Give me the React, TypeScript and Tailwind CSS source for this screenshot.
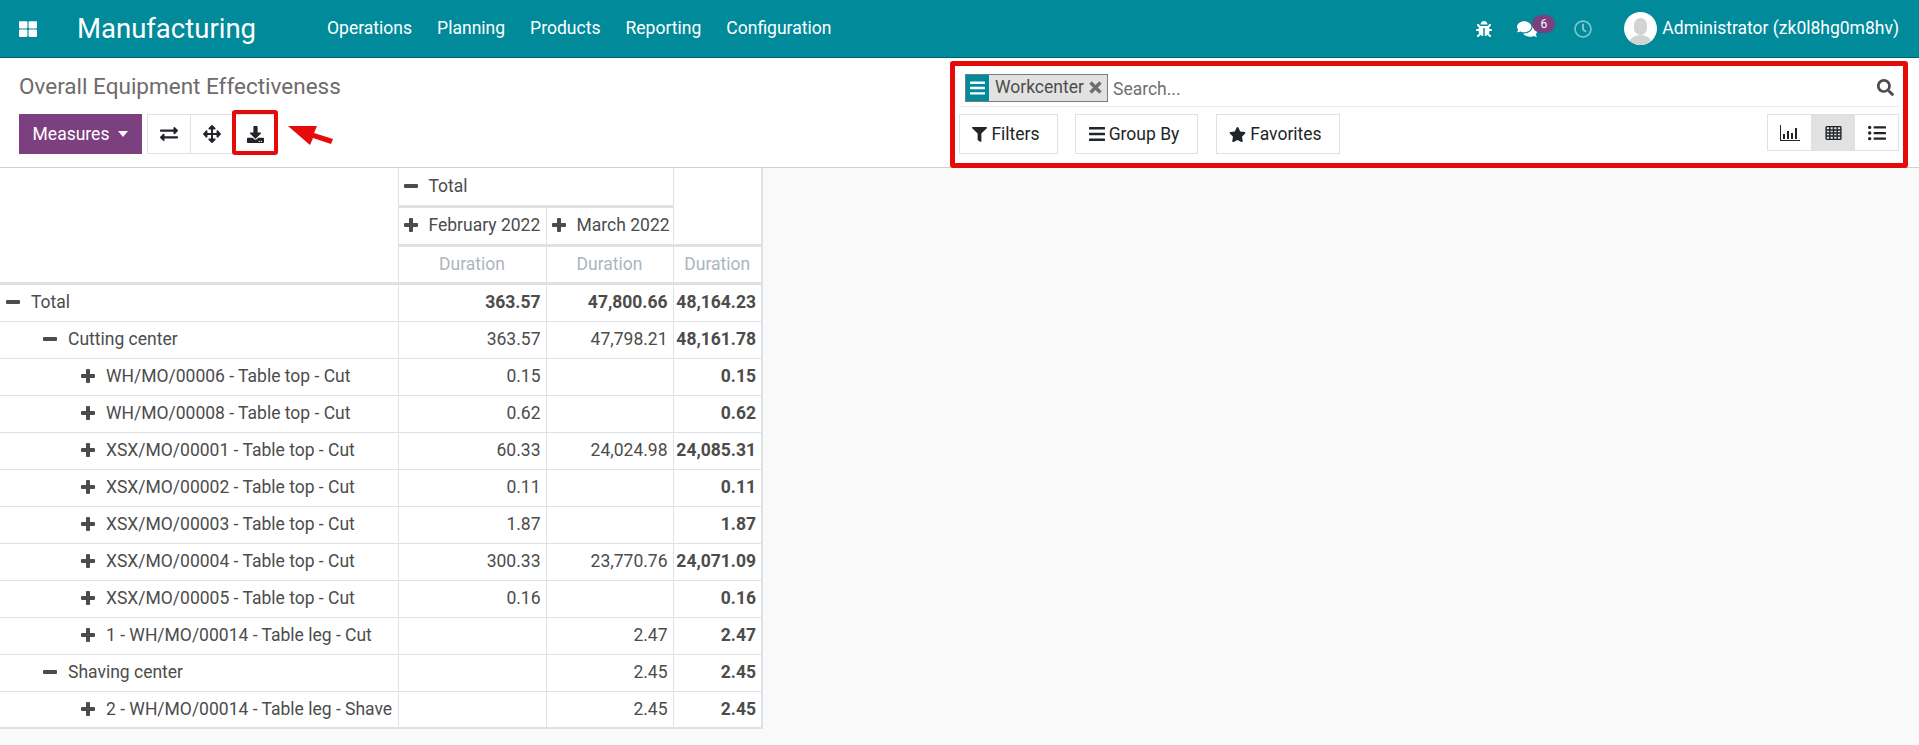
import {
  FaArrowsAlt,
  FaBug,
  FaComments,
  FaDownload,
  FaExchangeAlt,
  FaFilter,
  FaListUl,
  FaRegClock,
  FaSearch,
  FaStar,
  FaThLarge,
} from "react-icons/fa";

const menus = ["Operations", "Planning", "Products", "Reporting", "Configuration"];

type Row = {
  label: string;
  level: 0 | 1 | 2;
  open: boolean;
  feb?: string;
  mar?: string;
  total: string;
  bold?: boolean;
};

const rows: Row[] = [
  { label: "Total", level: 0, open: true, feb: "363.57", mar: "47,800.66", total: "48,164.23", bold: true },
  { label: "Cutting center", level: 1, open: true, feb: "363.57", mar: "47,798.21", total: "48,161.78" },
  { label: "WH/MO/00006 - Table top - Cut", level: 2, open: false, feb: "0.15", total: "0.15" },
  { label: "WH/MO/00008 - Table top - Cut", level: 2, open: false, feb: "0.62", total: "0.62" },
  { label: "XSX/MO/00001 - Table top - Cut", level: 2, open: false, feb: "60.33", mar: "24,024.98", total: "24,085.31" },
  { label: "XSX/MO/00002 - Table top - Cut", level: 2, open: false, feb: "0.11", total: "0.11" },
  { label: "XSX/MO/00003 - Table top - Cut", level: 2, open: false, feb: "1.87", total: "1.87" },
  { label: "XSX/MO/00004 - Table top - Cut", level: 2, open: false, feb: "300.33", mar: "23,770.76", total: "24,071.09" },
  { label: "XSX/MO/00005 - Table top - Cut", level: 2, open: false, feb: "0.16", total: "0.16" },
  { label: "1 - WH/MO/00014 - Table leg - Cut", level: 2, open: false, mar: "2.47", total: "2.47" },
  { label: "Shaving center", level: 1, open: true, mar: "2.45", total: "2.45" },
  { label: "2 - WH/MO/00014 - Table leg - Shave", level: 2, open: false, mar: "2.45", total: "2.45" },
];

const indent = ["pl-[6px]", "pl-[43px]", "pl-[81px]"];

function Toggle({ open }: { open: boolean }) {
  return (
    <svg className="mr-[11px] inline-block size-[14px] align-[-1px] text-[#4c4c4c]" viewBox="0 0 14 14" fill="currentColor">
      <rect x="0" y="5" width="14" height="4" rx="1" />
      {!open && <rect x="5" y="0" width="4" height="14" rx="1" />}
    </svg>
  );
}

function BarsIcon({ className }: { className: string }) {
  return (
    <svg className={className} viewBox="0 0 16 14" fill="currentColor">
      <rect y="0" width="16" height="2.6" rx="0.5" />
      <rect y="5.7" width="16" height="2.6" rx="0.5" />
      <rect y="11.4" width="16" height="2.6" rx="0.5" />
    </svg>
  );
}

function Navbar() {
  return (
    <header className="flex h-[58px] items-center border-b border-[#00646a] bg-[#008a9a] text-white">
      <FaThLarge className="ml-[19px] size-[18px]" />
      <span className="ml-[40px] text-[27.5px] leading-none">Manufacturing</span>
      <nav className="ml-[71px] flex gap-[25px] text-[17.55px]">
        {menus.map((m) => (
          <span key={m}>{m}</span>
        ))}
      </nav>
      <div className="ml-auto mr-[20px] flex items-center">
        <FaBug className="size-[16px]" />
        <div className="relative ml-[25px] h-[20px] w-[38px]">
          <FaComments className="size-[20px]" />
          <span className="absolute -top-[4px] left-[15px] flex h-[18px] w-[23px] items-center justify-center rounded-full bg-[#7c3f7f] text-[12px]">
            6
          </span>
        </div>
        <FaRegClock className="ml-[19px] size-[18px] opacity-50" />
        <div className="relative ml-[32px] size-[33px] overflow-hidden rounded-full bg-white">
          <span className="absolute left-[10px] top-[6px] h-[17px] w-[13px] rounded-full bg-[#d3d3d3]" />
          <span className="absolute left-[3px] top-[23px] h-[14px] w-[27px] rounded-t-full bg-[#d3d3d3]" />
        </div>
        <span className="ml-[5px] text-[17.5px]">Administrator (zk0l8hg0m8hv)</span>
      </div>
    </header>
  );
}

function Tool({ children, active }: { children: React.ReactNode; active?: boolean }) {
  return (
    <span
      className={`flex h-full flex-1 items-center justify-center border-r border-[#dee2e6] last:border-r-0 ${
        active ? "bg-[#e2e2e2]" : "bg-white"
      }`}
    >
      {children}
    </span>
  );
}

function FilterButton({ icon, label, className }: { icon: React.ReactNode; label: string; className: string }) {
  return (
    <span
      className={`flex h-[40px] items-center justify-center gap-[4px] border border-[#dee2e6] bg-white pr-[5px] text-[#212529] ${className}`}
    >
      {icon}
      {label}
    </span>
  );
}

function ControlPanel() {
  return (
    <section className="relative flex h-[110px] border-b border-[#cfcfcf] bg-white text-[17.5px]">
      <div className="w-[950px] pl-[19px]">
        <h1 className="mt-[14px] text-[22.5px] leading-[29px] text-[#6f6a6a]">Overall Equipment Effectiveness</h1>
        <div className="mt-[13px] flex h-[40px] items-center">
          <span className="flex h-[40px] w-[123px] items-center justify-center gap-[9px] bg-[#7c3f7f] text-white">
            Measures
            <svg className="h-[6px] w-[10px]" viewBox="0 0 10 6" fill="currentColor">
              <path d="M0 0h10L5 6z" />
            </svg>
          </span>
          <div className="ml-[5px] flex h-[40px] w-[130px] border border-[#dee2e6] text-[#212529]">
            <Tool>
              <FaExchangeAlt className="size-[18px]" />
            </Tool>
            <Tool>
              <FaArrowsAlt className="size-[18px]" />
            </Tool>
            <Tool>
              <FaDownload className="size-[17px]" />
            </Tool>
          </div>
          {/* annotation: arrow pointing at the download button */}
          <svg className="ml-[11px] mt-[2px] h-[21px] w-[46px]" viewBox="0 0 46 21">
            <path d="M0 1 L29 1 L26 8 L45 14 L43 19 L25 13 L22 20 Z" fill="#e60b0b" />
          </svg>
        </div>
      </div>

      <div className="flex-1 pl-[9px] pr-[20px]">
        <div className="flex h-[49px] items-center border-b border-[#e9ecef] pl-[6px] pt-[11px]">
          <span className="flex h-[28px] w-[143px] items-center border border-[#7a7a7a] bg-[#e2e2e2] text-[#4c4c4c]">
            <span className="flex h-full w-[23px] items-center justify-center bg-[#008a9a] text-white">
              <BarsIcon className="h-[14px] w-[15px]" />
            </span>
            <span className="ml-[6px]">Workcenter</span>
            <svg className="ml-[5px] size-[13px] text-[#6f6f6f]" viewBox="0 0 13 13" stroke="currentColor" strokeWidth="3.4">
              <path d="M1.5 1.5l10 10M11.5 1.5l-10 10" />
            </svg>
          </span>
          <span className="ml-[5px] mt-[3px] text-[#6f6f6f]">Search...</span>
          <FaSearch className="ml-auto mr-[5px] size-[17px] text-[#4c4c4c]" />
        </div>
        <div className="mt-[7px] flex">
          <FilterButton icon={<FaFilter className="size-[15px]" />} label="Filters" className="w-[99px]" />
          <FilterButton icon={<BarsIcon className="h-[14px] w-[16px]" />} label="Group By" className="ml-[17px] w-[123px]" />
          <FilterButton icon={<FaStar className="size-[17px]" />} label="Favorites" className="ml-[18px] w-[124px]" />
          <div className="ml-auto flex h-[37px] w-[132px] border border-[#dee2e6] text-[#212529]">
            <Tool>
              <svg className="ml-[2px] size-[20px]" viewBox="0 0 20 20" fill="currentColor">
                <path d="M0 2h1v15h19v1H0z" />
                <path d="M3 11h2v5H3zM7 8h2v8H7zM11 10h2v6h-2zM15 5h2v11h-2z" />
              </svg>
            </Tool>
            <Tool active>
              <svg className="ml-[1px] h-[14px] w-[17px]" viewBox="0 0 16 14" fill="none" stroke="currentColor" strokeWidth="1.4">
                <rect x="0.6" y="0.6" width="14.8" height="12.8" rx="1" />
                <path d="M0.6 4h14.8M0.6 7h14.8M0.6 10h14.8M4.3 0.6v12.8M8 0.6v12.8M11.7 0.6v12.8" />
              </svg>
            </Tool>
            <Tool>
              <FaListUl className="size-[18px]" />
            </Tool>
          </div>
        </div>
      </div>

      {/* annotation: red frames drawn over the screenshot */}
      <span className="absolute left-[232px] top-[52px] h-[45px] w-[46px] rounded-[3px] border-[4px] border-[#e60b0b]" />
      <span className="absolute left-[950px] top-[3px] h-[107px] w-[958px] rounded-[3px] border-[5px] border-[#e60b0b]" />
    </section>
  );
}

function PivotTable() {
  return (
    <table className="w-[762px] table-fixed border-collapse border-r-2 border-b-2 border-[#dee2e6] bg-white text-[17.5px] text-[#4c4c4c]">
      <colgroup>
        <col className="w-[398px]" />
        <col className="w-[148px]" />
        <col className="w-[127px]" />
        <col className="w-[89px]" />
      </colgroup>
      <thead>
        <tr className="h-[38px]">
          <th rowSpan={3} className="border-b-[3px] border-r border-[#dee2e6]" />
          <th colSpan={2} className="border-b-[3px] border-[#dee2e6] pl-[5px] text-left font-normal">
            <Toggle open />
            Total
          </th>
          <th rowSpan={2} className="border-b-[3px] border-l border-[#dee2e6]" />
        </tr>
        <tr className="h-[39px]">
          <th className="whitespace-nowrap border-b-[3px] border-r border-[#dee2e6] pl-[5px] text-left font-normal">
            <Toggle open={false} />
            February 2022
          </th>
          <th className="whitespace-nowrap border-b-[3px] border-[#dee2e6] pl-[5px] text-left font-normal">
            <Toggle open={false} />
            March 2022
          </th>
        </tr>
        <tr className="h-[38px] text-[#adb5bd]">
          <th className="border-b-[3px] border-r border-[#dee2e6] font-normal">Duration</th>
          <th className="border-b-[3px] border-r border-[#dee2e6] font-normal">Duration</th>
          <th className="border-b-[3px] border-[#dee2e6] font-normal">Duration</th>
        </tr>
      </thead>
      <tbody>
        {rows.map((r, i) => (
          <tr key={r.label} className={`border-b border-[#dee2e6] ${i === 0 ? "h-[38px]" : "h-[37px]"}`}>
            <td className={`whitespace-nowrap border-r border-[#dee2e6] ${indent[r.level]}`}>
              <Toggle open={r.open} />
              {r.label}
            </td>
            <td className={`border-r border-[#dee2e6] pr-[5px] text-right ${r.bold ? "font-bold" : ""}`}>{r.feb}</td>
            <td className={`border-r border-[#dee2e6] pr-[5px] text-right ${r.bold ? "font-bold" : ""}`}>{r.mar}</td>
            <td className="pr-[5px] text-right font-bold">{r.total}</td>
          </tr>
        ))}
      </tbody>
    </table>
  );
}

export default function App() {
  return (
    <div className="h-[745px] overflow-hidden bg-[#f9f9f9] font-['Roboto',sans-serif]">
      <Navbar />
      <ControlPanel />
      <PivotTable />
    </div>
  );
}
